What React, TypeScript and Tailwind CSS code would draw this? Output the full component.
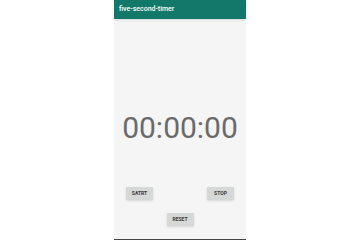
export default function App() {
  return (
    <div className="flex h-[240px] w-[360px] justify-center bg-white font-['Roboto',sans-serif]">
      <div className="flex h-[240px] w-[132px] flex-col bg-[#f5f5f5]">
        <header className="flex h-[19px] items-center bg-[#12796a] px-[5px] shadow-sm">
          <span className="text-[7px] font-medium text-white">five-second-timer</span>
        </header>

        <div className="flex flex-1 flex-col items-center">
          <div className="mt-[92px] text-[30px] leading-[34px] text-[#6a6a6a]">00:00:00</div>

          <div className="mt-[42px] flex w-full justify-between px-[12px]">
            <button className="h-[13px] w-[27px] rounded-[1px] bg-[#d6d7d7] text-[5px] font-bold text-[#3a3a3a] shadow-sm">
              SATRT
            </button>
            <button className="h-[13px] w-[27px] rounded-[1px] bg-[#d6d7d7] text-[5px] font-bold text-[#3a3a3a] shadow-sm">
              STOP
            </button>
          </div>

          <button className="mt-[13px] h-[13px] w-[27px] rounded-[1px] bg-[#d6d7d7] text-[5px] font-bold text-[#3a3a3a] shadow-sm">
            RESET
          </button>
        </div>

        <div className="h-[1px] bg-[#444444]" />
      </div>
    </div>
  )
}
